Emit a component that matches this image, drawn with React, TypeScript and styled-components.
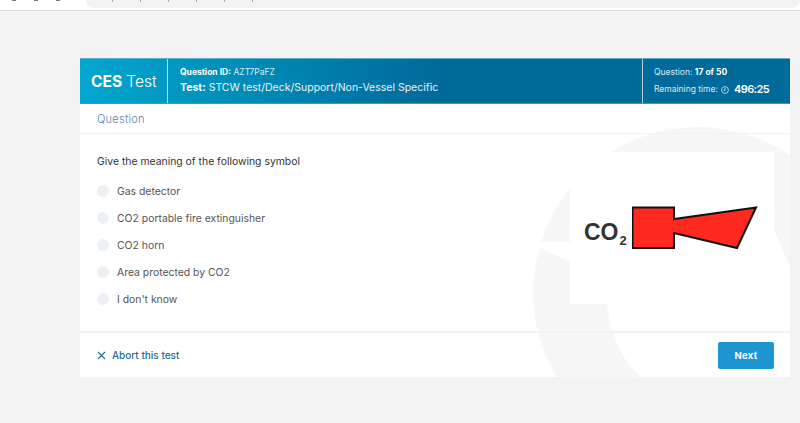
import React from 'react';
import styled, { createGlobalStyle } from 'styled-components';

const options = [
  'Gas detector',
  'CO2 portable fire extinguisher',
  'CO2 horn',
  'Area protected by CO2',
  "I don't know",
];

const GlobalStyle = createGlobalStyle`
  html, body {
    margin: 0;
    height: 100%;
    background: #f3f3f3;
    font-family: Inter, "Liberation Sans", sans-serif;
  }
`;

const Shell = styled.div`
  width: 800px;
  height: 423px;
  overflow: hidden;
`;

const BrowserBar = styled.div`
  height: 10px;
  background: #fff;
  border-bottom: 1px solid #dcdcdc;
  display: flex;
  align-items: flex-start;
  padding-left: 12px;
  gap: 18px;
`;

const NavMark = styled.span`
  width: 4px;
  height: 1px;
  background: #777;
`;

const UrlPill = styled.div`
  margin-left: 8px;
  width: 720px;
  height: 8px;
  background: #f1f3f4;
  border-radius: 0 0 8px 8px;
  display: flex;
  gap: 27px;
  padding-left: 26px;
  box-sizing: border-box;
`;

const UrlMark = styled.span`
  width: 1px;
  height: 2px;
  background: #a4a8ac;
`;

const Main = styled.main`
  padding: 47px 10px 0 80px;
`;

const Card = styled.section`
  position: relative;
  width: 710px;
  height: 319px;
  background: #fff;
  overflow: hidden;
`;

const Watermark = styled.svg`
  position: absolute;
  inset: 0;
  fill: #f7f7f7;
`;

const Header = styled.header`
  position: relative;
  height: 46px;
  box-sizing: border-box;
  display: flex;
  color: #fff;
  background: linear-gradient(90deg, #02a7cf 0%, #0080ad 33%, #006a9b 50%, #006a9b 100%);
  border-top: 1px solid #5db0cd;
  border-bottom: 1px solid #4c93b7;
`;

const Brand = styled.div`
  width: 88px;
  box-sizing: border-box;
  padding-left: 11px;
  display: flex;
  align-items: center;
  font-size: 15.6px;
  font-weight: 300;
  border-right: 1px solid #b5dbe8;
  white-space: nowrap;

  b {
    font-weight: 700;
    margin-right: 4px;
  }
`;

const TestInfo = styled.div`
  flex: 1;
  padding: 8px 0 0 12px;
  border-right: 1px solid #b5d0df;
`;

const Progress = styled.div`
  width: 147px;
  box-sizing: border-box;
  padding: 8px 0 0 11px;
`;

const SmallLine = styled.div`
  font-size: 8.5px;
  line-height: 11px;
  white-space: nowrap;
  color: #d8ecf4;

  b {
    font-weight: 700;
    color: #fff;
  }
`;

const TestLine = styled.div`
  margin-top: 3px;
  font-size: 10.5px;
  line-height: 14px;
  white-space: nowrap;
  color: #e6f3f8;

  b {
    font-weight: 700;
    color: #fff;
  }
`;

const TimeLine = styled(SmallLine)`
  margin-top: 4px;
  line-height: 15px;
  display: flex;
  align-items: center;
  gap: 3px;

  b {
    font-size: 11px;
    font-weight: 600;
    letter-spacing: -0.6px;
    margin-left: 2px;
  }
`;

const TabRow = styled.div`
  position: relative;
  height: 30px;
  box-sizing: border-box;
  padding: 9px 17px 0;
  font-size: 11px;
  line-height: 13px;
  letter-spacing: 0.25px;
  font-weight: 300;
  color: #5f83a8;
  border-bottom: 1px solid #eef3f7;
`;

const Body = styled.div`
  position: relative;
  height: 197px;
  box-sizing: border-box;
  padding: 18px 16px 0 17px;
  display: flex;
  justify-content: space-between;
`;

const QuestionColumn = styled.div`
  padding-top: 1px;
  display: flex;
  flex-direction: column;
`;

const Prompt = styled.p`
  margin: 0 0 11px;
  font-size: 10.4px;
  line-height: 18px;
  color: #333;
`;

const OptionList = styled.ul`
  list-style: none;
  margin: 0;
  padding: 0;
  display: flex;
  flex-direction: column;
  gap: 9px;
`;

const Option = styled.li`
  height: 18px;
  display: flex;
  align-items: center;
  gap: 8px;
  font-size: 10.4px;
  color: #555;
`;

const Radio = styled.span`
  width: 12px;
  height: 12px;
  border-radius: 50%;
  background: #edf1f5;
`;

const Figure = styled.figure`
  margin: 0;
  width: 204px;
  height: 152px;
  background: #fff;
  display: flex;
  align-items: flex-start;
  box-sizing: border-box;
  padding: 54px 0 0 14px;
`;

const Formula = styled.span`
  margin-top: 13px;
  width: 48px;
  font-family: "Liberation Sans", Arial, sans-serif;
  font-size: 23px;
  line-height: 26px;
  font-weight: 700;
  color: #333;

  sub {
    font-size: 13px;
    line-height: 0;
    vertical-align: -5px;
    margin-left: 1px;
  }
`;

const Footer = styled.footer`
  position: relative;
  height: 46px;
  box-sizing: border-box;
  border-top: 2px solid #f3f3f3;
  padding: 9px 16px 0 17px;
  display: flex;
  justify-content: space-between;
`;

const AbortLink = styled.a`
  display: flex;
  align-items: center;
  gap: 6px;
  height: 26px;
  font-size: 10px;
  font-weight: 500;
  color: #1f6c9c;
`;

const NextButton = styled.button`
  width: 56px;
  height: 27px;
  border: 0;
  border-radius: 2px;
  background: #1c95d1;
  color: #fff;
  font-family: inherit;
  font-size: 9.5px;
  font-weight: 700;
  letter-spacing: 0.3px;
`;

const App: React.FC = () => (
  <Shell>
    <GlobalStyle />
    <BrowserBar>
      <NavMark />
      <NavMark />
      <NavMark />
      <UrlPill>
        <UrlMark />
        <UrlMark />
        <UrlMark />
        <UrlMark />
        <UrlMark />
        <UrlMark />
      </UrlPill>
    </BrowserBar>
    <Main>
      <Card>
        <Watermark width="710" height="319" viewBox="80 58 710 319">
          <path d="M541 242 A165 165 0 0 1 790 155 L790 267 L773 227 L700 180 L570 242 Z" />
          <path d="M540 248 L570 262 L590 304 L607 304 Q612 350 640 377 L556 377 Q520 310 540 248 Z" />
        </Watermark>
        <Header>
          <Brand>
            <b>CES</b> Test
          </Brand>
          <TestInfo>
            <SmallLine>
              <b>Question ID:</b> AZT7PaFZ
            </SmallLine>
            <TestLine>
              <b>Test:</b> STCW test/Deck/Support/Non-Vessel Specific
            </TestLine>
          </TestInfo>
          <Progress>
            <SmallLine>
              Question: <b>17 of 50</b>
            </SmallLine>
            <TimeLine>
              Remaining time:
              <svg width="8" height="8" viewBox="0 0 8 8" fill="none" stroke="#d8ecf4" strokeWidth="0.8">
                <circle cx="4" cy="4" r="3.4" />
                <path d="M4 1.8V4.4H2.6" />
              </svg>
              <b>496:25</b>
            </TimeLine>
          </Progress>
        </Header>
        <TabRow>Question</TabRow>
        <Body>
          <QuestionColumn>
            <Prompt>Give the meaning of the following symbol</Prompt>
            <OptionList>
              {options.map(option => (
                <Option key={option}>
                  <Radio />
                  {option}
                </Option>
              ))}
            </OptionList>
          </QuestionColumn>
          <Figure>
            <Formula>
              CO<sub>2</sub>
            </Formula>
            <svg width="128" height="44" viewBox="632 205 128 44">
              <path
                d="M632.5 206.5H674V218L756 206.5L737 247L674 232V247H632.5Z"
                fill="#ff291f"
                stroke="#111"
                strokeWidth="2"
              />
            </svg>
          </Figure>
        </Body>
        <Footer>
          <AbortLink>
            <svg width="9" height="9" viewBox="0 0 9 9" stroke="#1f6c9c" strokeWidth="1.1" fill="none">
              <path d="M1 1L8 8M8 1L1 8" />
            </svg>
            Abort this test
          </AbortLink>
          <NextButton>Next</NextButton>
        </Footer>
      </Card>
    </Main>
  </Shell>
);

export default App;
